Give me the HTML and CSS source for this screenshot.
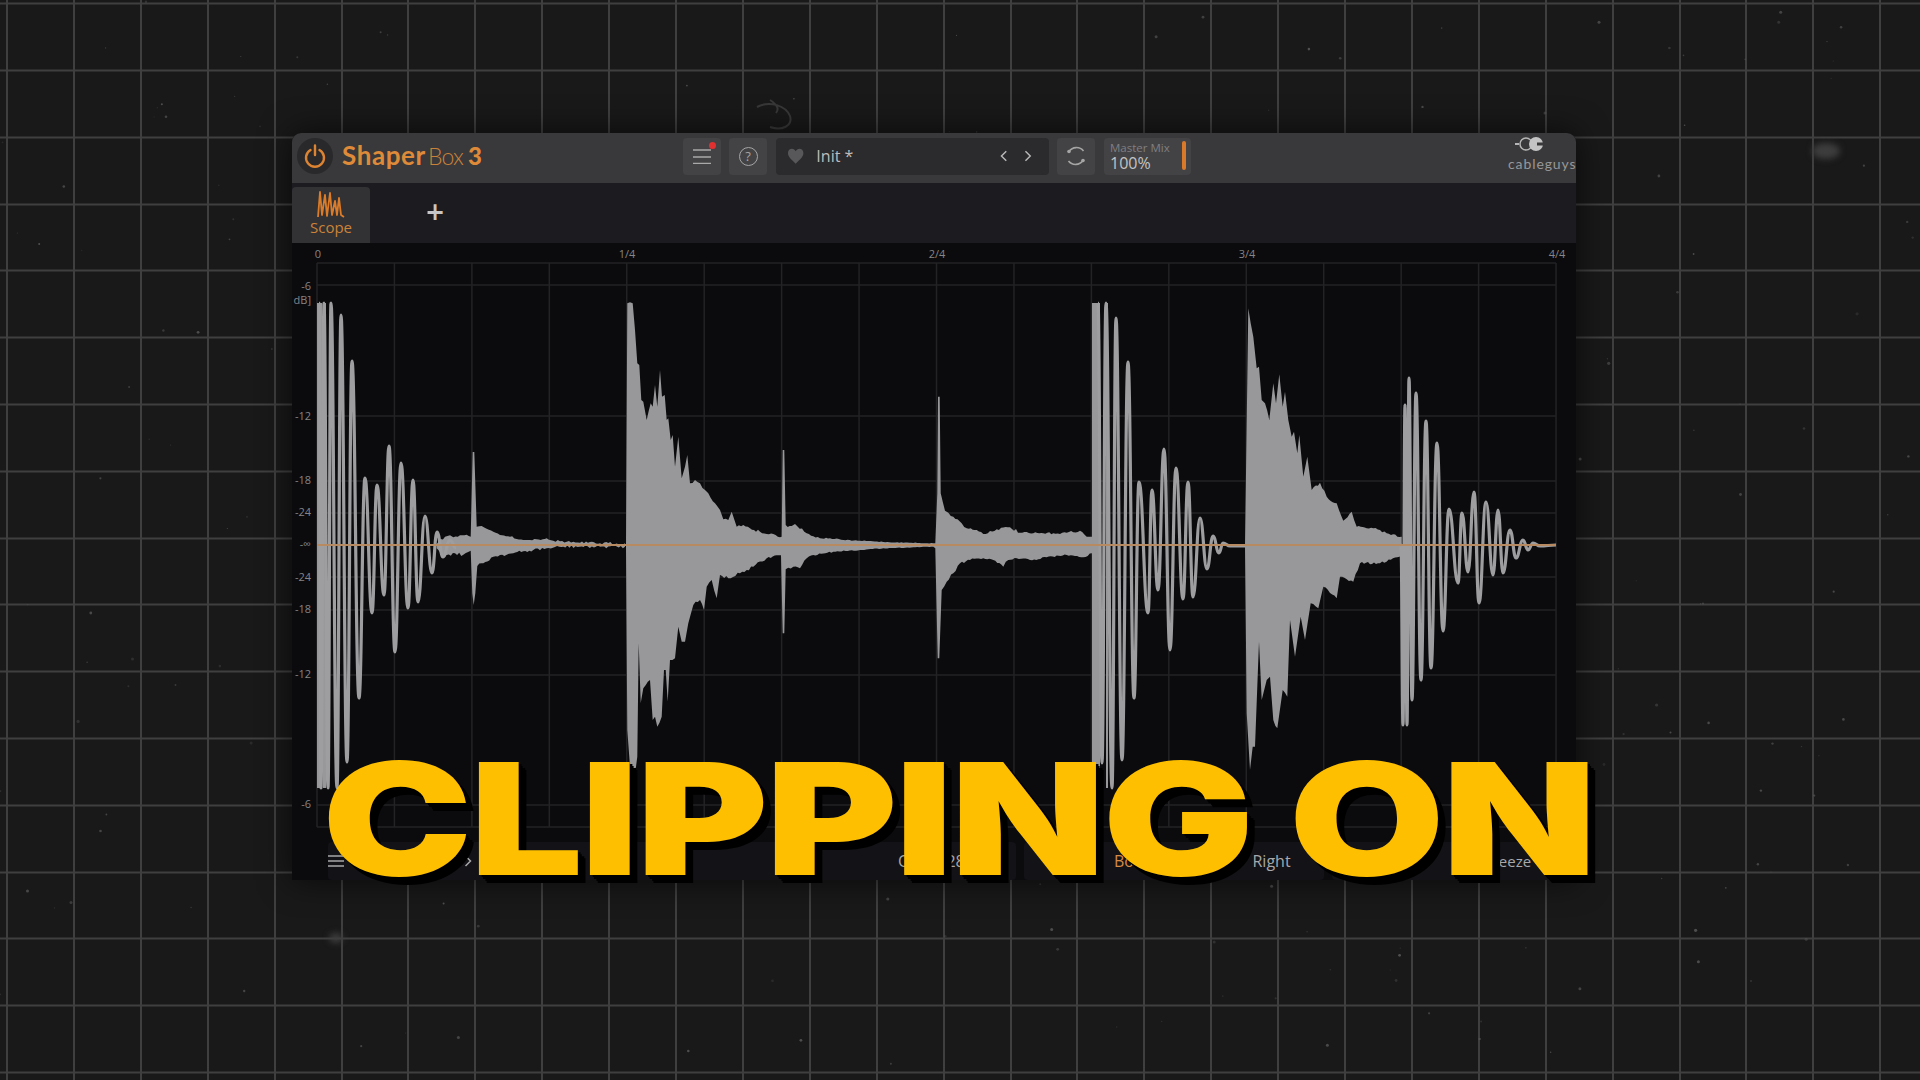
FILE: index.html
```html
<!DOCTYPE html>
<html lang="en">
<head>
    <meta charset="UTF-8">
    <title>ShaperBox 3 - Clipping On</title>
    <link rel="stylesheet" href="styles.css">
</head>
<body>
    <svg class="desk" id="desk" viewBox="0 0 1920 1080">
        <path class="scribble" d="M757 107 C770 100 786 106 790 116 C793 126 782 131 770 127 M770 100 C776 104 780 108 776 113"/>
        <ellipse class="smudge" cx="1826" cy="151" rx="14" ry="8"/>
        <ellipse class="smudge" cx="336" cy="938" rx="7" ry="5"/>
    </svg>

    <div class="plugin">
        <div class="topbar">
            <div class="power">
                <svg width="22" height="24" viewBox="0 0 22 24"><path d="M6.500 6 A9 9 0 1 0 15.500 6 M11 1.500 V11"/></svg>
            </div>
            <div class="title"><b>Shaper</b><span>Box</span><b class="three">3</b></div>

            <div class="btn menu-btn">
                <svg width="20" height="16" viewBox="0 0 20 16"><path d="M1 2 H19 M1 9 H19 M1 15.500 H19"/></svg>
                <i class="red-dot"></i>
            </div>
            <div class="btn help-btn"><span class="help">?</span></div>

            <div class="preset">
                <svg class="heart" width="18" height="16" viewBox="0 0 18 16"><path d="M9 16 C4 11 1 9 1 5 C1 2 3 0.500 5 0.500 C7 0.500 8 1.500 9 3 C10 1.500 11 0.500 13 0.500 C15 0.500 17 2 17 5 C17 9 14 11 9 16 Z"/></svg>
                <span class="preset-name">Init *</span>
                <svg class="chev" width="8" height="14" viewBox="0 0 8 14"><path d="M6.500 2 L1.500 7 L6.500 12"/></svg>
                <svg class="chev" width="8" height="14" viewBox="0 0 8 14"><path d="M1.500 2 L6.500 7 L1.500 12"/></svg>
            </div>

            <div class="btn sync-btn">
                <svg width="22" height="22" viewBox="0 0 22 22"><path d="M4 6.500 A9 9 0 0 1 18.500 6 M18 15.500 A9 9 0 0 1 3.500 16"/><circle cx="4" cy="6.500" r="1.800"/><circle cx="18" cy="15.500" r="1.800"/></svg>
            </div>

            <div class="master">
                <div>
                    <div class="master-label">Master Mix</div>
                    <div class="master-value">100%</div>
                </div>
                <i class="master-bar"></i>
            </div>

            <div class="brand">
                <svg width="32" height="16" viewBox="0 0 32 16">
                    <path class="plug-line" d="M1 8 H5"/>
                    <circle class="plug-ring" cx="12" cy="8" r="6"/>
                    <circle class="plug-fill" cx="22" cy="8" r="7"/>
                    <rect class="plug-cut" x="23" y="6.500" width="8" height="3"/>
                </svg>
                <div class="brand-name">cableguys</div>
            </div>
        </div>

        <div class="tabs">
            <div class="tab">
                <svg width="28" height="27" viewBox="0 0 28 27"><path d="M1 26 L3 1 L5 24 L8 4 L10 25 L13 2 L15 24 L18 10 L20 24 L22 7 L24 24 L27 26"/></svg>
                <span>Scope</span>
            </div>
            <div class="add-tab">+</div>
        </div>

        <svg class="scope" id="scope" viewBox="292 243 1284 599">
            <g class="ruler">
                <text x="318" y="258">0</text>
                <text x="627" y="258">1/4</text>
                <text x="937" y="258">2/4</text>
                <text x="1247" y="258">3/4</text>
                <text x="1557" y="258">4/4</text>
            </g>
            <g id="gridlines"></g>
            <g class="levels">
                <text x="311" y="290">-6</text>
                <text x="311" y="304">dB]</text>
                <text x="311" y="420">-12</text>
                <text x="311" y="484">-18</text>
                <text x="311" y="516">-24</text>
                <text x="311" y="548">-∞</text>
                <text x="311" y="581">-24</text>
                <text x="311" y="613">-18</text>
                <text x="311" y="678">-12</text>
                <text x="311" y="808">-6</text>
            </g>
            <g id="wave"></g>
            <rect class="zero-line" x="317" y="544" width="1239" height="2"/>
        </svg>

        <div class="bottombar">
            <div class="panel panel-list">
                <svg width="16" height="12" viewBox="0 0 16 12"><path d="M0 1 H16 M0 6 H16 M0 11 H16"/></svg>
                <svg class="next" width="8" height="14" viewBox="0 0 8 14"><path d="M1.500 2 L6.500 7 L1.500 12"/></svg>
                <span class="hold">Hold</span>
            </div>
            <div class="panel panel-time">
                <span>O</span><span class="res">28</span><i class="tick"></i>
            </div>
            <div class="panel panel-chan">
                <span class="on">Both</span><span class="right">Right</span>
            </div>
            <div class="panel panel-freeze"><span>Freeze</span></div>
        </div>
    </div>

    <div class="caption">CLIPPING ON</div>

    <script src="wave.js"></script>
</body>
</html>
```

FILE: styles.css
```css
html, body {
    margin: 0;
    height: 100%;
}

body {
    width: 1920px;
    height: 1080px;
    overflow: hidden;
    position: relative;
    box-sizing: border-box;
    padding: 133px 0 0 292px;
    font-family: "Open Sans", Arial, sans-serif;
    background-color: #19191a;
    background-image:
        repeating-linear-gradient(90deg, transparent 0, transparent 6px, #3f3f40 6px, #3f3f40 8px, transparent 8px, transparent 66.900px),
        repeating-linear-gradient(0deg, transparent 0, transparent 6px, #3f3f40 6px, #3f3f40 8px, transparent 8px, transparent 66.800px);
    background-position: 0 0, 0 -0.500px;
}

/* Desk specks */
.desk {
    position: absolute;
    left: 0;
    top: 0;
    width: 1920px;
    height: 1080px;
}
.speck { fill: #5a5a5a; }
.scribble {
    fill: none;
    stroke: #383838;
    stroke-width: 2;
}
.smudge { fill: #3d3d3d; filter: blur(3px); }

/* Plugin window */
.plugin {
    position: relative;
    width: 1284px;
    height: 747px;
    display: flex;
    flex-direction: column;
    background: #0b0b0e;
    border-radius: 9px 9px 0 0;
    box-shadow: 0 0 32px rgba(0, 0, 0, 0.65);
}

.topbar {
    height: 50px;
    flex: none;
    display: flex;
    align-items: center;
    background: #39393b;
    border-radius: 9px 9px 0 0;
    box-sizing: border-box;
    padding: 0 0 4px 5px;
}
.power {
    width: 36px;
    height: 36px;
    border-radius: 50%;
    background: #29292b;
    display: flex;
    align-items: center;
    justify-content: center;
}
.power svg path {
    fill: none;
    stroke: #dd8432;
    stroke-width: 2.400;
    stroke-linecap: round;
}
.title {
    width: 341px;
    margin: -2px 0 0 9px;
    flex: none;
    color: #de8a38;
    font-family: Lato, sans-serif;
    font-size: 26px;
    letter-spacing: 0.600px;
    line-height: 1;
}
.title b { font-weight: 700; }
.title span {
    font-weight: 300;
    font-size: 23px;
    margin-left: 2px;
    letter-spacing: -0.800px;
    color: #c98238;
}
.title .three { margin-left: 5px; font-weight: 900; font-size: 24px; }

.btn {
    width: 38px;
    height: 37px;
    flex: none;
    position: relative;
    border-radius: 4px;
    background: #434345;
    display: flex;
    align-items: center;
    justify-content: center;
}
.menu-btn svg path {
    stroke: #a9a9a9;
    stroke-width: 1.600;
    fill: none;
}
.red-dot {
    position: absolute;
    right: 5px;
    top: 4px;
    width: 7px;
    height: 7px;
    border-radius: 50%;
    background: #e03030;
}
.help-btn { margin-left: 8px; }
.help {
    width: 17px;
    height: 17px;
    border: 1.500px solid #a5a5a5;
    border-radius: 50%;
    color: #a5a5a5;
    font-size: 13px;
    line-height: 17px;
    text-align: center;
}
.preset {
    width: 273px;
    height: 37px;
    margin-left: 9px;
    flex: none;
    box-sizing: border-box;
    padding-left: 11px;
    display: flex;
    align-items: center;
    border-radius: 4px;
    background: #2b2b2d;
}
.heart path { fill: #58585a; }
.preset-name {
    margin-left: 12px;
    width: 190px;
    font-size: 16px;
    color: #bdbdbd;
}
.chev { margin-right: 17px; }
.chev path, .next path {
    fill: none;
    stroke: #b8b8b8;
    stroke-width: 1.500;
}
.sync-btn { margin-left: 8px; }
.sync-btn path {
    fill: none;
    stroke: #a5a5a5;
    stroke-width: 1.600;
}
.sync-btn circle { fill: #a5a5a5; }
.master {
    width: 87px;
    height: 37px;
    margin-left: 9px;
    flex: none;
    box-sizing: border-box;
    padding: 3px 5px 0 6px;
    display: flex;
    justify-content: space-between;
    border-radius: 4px;
    background: #434345;
}
.master-label {
    font-size: 11.500px;
    line-height: 14px;
    color: #7f7f81;
}
.master-value {
    font-size: 16px;
    line-height: 17px;
    color: #c4c4c4;
}
.master-bar {
    width: 4px;
    height: 29px;
    border-radius: 2px;
    background: #d9792a;
}
.brand {
    margin-left: auto;
    width: 68px;
    flex: none;
    text-align: center;
    margin-top: -3px;
}
.brand svg { display: block; margin: -2px 0 4px 1px; position: relative; left: 5px; }
.plug-line { stroke: #b5b5b5; stroke-width: 2; }
.plug-ring { fill: none; stroke: #b5b5b5; stroke-width: 1.500; }
.plug-fill { fill: #c4c4c4; }
.plug-cut { fill: #39393b; }
.brand-name {
    font-family: Lato, sans-serif;
    font-size: 14px;
    letter-spacing: 0.900px;
    line-height: 15px;
    color: #979799;
    white-space: nowrap;
}

.tabs {
    height: 60px;
    flex: none;
    display: flex;
    background: #1c1c20;
}
.tab {
    width: 78px;
    height: 56px;
    margin-top: 4px;
    box-sizing: border-box;
    padding-top: 4px;
    display: flex;
    flex-direction: column;
    align-items: center;
    background: #323234;
    border-radius: 4px 4px 0 0;
    color: #cc8338;
    font-size: 15px;
    line-height: 18px;
}
.tab svg path {
    fill: none;
    stroke: #dd7c28;
    stroke-width: 1.800;
    stroke-linejoin: round;
}
.add-tab {
    margin: 9px 0 0 55px;
    font-family: "DejaVu Sans", sans-serif;
    font-size: 24px;
    font-weight: 700;
    line-height: 40px;
    color: #c6c6c8;
}

.scope {
    width: 1284px;
    height: 599px;
    flex: none;
    display: block;
}
.ruler text, .levels text {
    font-family: "Open Sans", Arial, sans-serif;
    font-size: 11px;
    fill: #858587;
}
.ruler text { text-anchor: middle; }
.levels text { text-anchor: end; }
.grid-line {
    stroke: #232325;
    stroke-width: 1.500;
}
.wave-fill { fill: #98989a; }
.wave-line {
    fill: none;
    stroke: #9e9ea0;
    stroke-width: 3.200;
    stroke-linejoin: round;
}
.zero-line { fill: #b88a62; }

.bottombar {
    flex: 1;
    display: flex;
    box-sizing: border-box;
    padding-left: 36px;
    gap: 8px;
}
.panel {
    height: 38px;
    flex: none;
    box-sizing: border-box;
    display: flex;
    align-items: center;
    background: #131317;
    border-radius: 4px;
    font-size: 16px;
    color: #a8a8aa;
}
.panel-list { width: 340px; }
.panel-list svg path { stroke: #a8a8aa; stroke-width: 1.500; fill: none; }
.next { margin-left: 120px; }
.hold { margin-left: 130px; }
.panel-time { width: 340px; padding-left: 222px; }
.res { margin-left: 36px; }
.tick {
    width: 2px;
    height: 12px;
    margin: 14px 0 0 38px;
    background: #d9792a;
}
.panel-chan { width: 300px; padding-left: 90px; }
.on { color: #d58a45; }
.right { margin-left: 103px; }
.panel-freeze { width: 225px; padding-left: 153px; font-size: 15px; }

/* Big yellow title over the video */
.caption {
    position: absolute;
    left: 322px;
    top: 731px;
    font-family: Inter, "Liberation Sans", sans-serif;
    font-size: 156px;
    font-weight: 900;
    line-height: 176px;
    white-space: nowrap;
    color: #fdbf00;
    transform-origin: 0 0;
    transform: scaleX(1.29);
    letter-spacing: -2.200px;
    text-shadow: 2px 2px 0 #000, 3px 4px 0 #000, 5px 6px 0 #000, 6px 8px 0 #000;
}
```

FILE: wave.js
```js
const NS = "http://www.w3.org/2000/svg";

function addTo(parent, tag, attrs) {
    const el = document.createElementNS(NS, tag);
    for (const key in attrs) el.setAttribute(key, attrs[key]);
    parent.appendChild(el);
    return el;
}

// background specks, seeded so each run looks the same
const desk = document.getElementById("desk");
let seed = 7;
function rnd() {
    seed = (seed * 16807) % 2147483647;
    return seed / 2147483647;
}
for (let i = 0; i < 260; i++) {
    addTo(desk, "circle", {
        class: "speck",
        cx: (rnd() * 1920).toFixed(1),
        cy: (rnd() * 1080).toFixed(1),
        r: (0.5 + rnd() * 1.1).toFixed(1),
        opacity: (0.25 + rnd() * 0.6).toFixed(2),
    });
}

// scope grid
const grid = document.getElementById("gridlines");
const levels = [263, 285, 416, 481, 513, 545, 577, 610, 675, 805, 827];
levels.forEach((y) => addTo(grid, "line", { class: "grid-line", x1: 317, x2: 1556, y1: y, y2: y }));
for (let i = 0; i <= 16; i++) {
    const x = 317 + i * 77.44;
    addTo(grid, "line", { class: "grid-line", x1: x, x2: x, y1: 263, y2: 827 });
}

const wave = document.getElementById("wave");

// dense parts: outlines read off 3x crops, [ox, oy, top, bottom]
const bodies = [
    [280, 260,
        [[470,852],[495,830],[510,826],[520,832],[540,826],[560,824],[572,830],[578,576],[583,576],[590,800],[605,798],[620,806],[640,815],[660,825],[690,830],[730,840],[770,838],[800,835],[820,842],[860,845],[900,848],[960,850],[1035,850]],
        [[470,865],[485,888],[500,885],[525,880],[550,884],[572,872],[577,1000],[581,1035],[586,1000],[592,918],[610,910],[640,890],[660,885],[700,880],[760,870],[800,865],[850,860],[960,860],[1035,860]]],
    [600, 280,
        [[78,797],[82,70],[98,70],[105,150],[112,250],[118,255],[124,360],[130,365],[140,420],[152,370],[158,380],[165,315],[172,380],[180,270],[186,350],[194,345],[200,420],[205,415],[212,480],[218,465],[225,560],[235,470],[245,595],[255,560],[262,525],[270,610],[285,600],[300,610],[315,630],[325,640],[345,670],[360,690],[370,718],[385,720],[395,695],[410,740],[430,735],[450,745],[480,755],[500,762],[520,762],[540,772],[545,770],[548,510],[553,510],[557,735],[575,738],[585,732],[620,760],[660,775],[690,775],[730,780],[780,782],[850,786],[1000,790],[1006,790],[1012,640],[1014,350],[1019,350],[1022,640],[1035,692],[1045,698],[1060,710],[1085,730],[1100,745],[1130,750],[1150,762],[1190,748],[1230,742],[1260,758],[1300,760],[1360,760],[1400,758],[1440,752],[1460,770],[1476,770]],
        [[78,800],[82,1350],[90,1460],[100,1500],[108,1460],[112,1430],[116,1090],[122,1270],[130,1225],[150,1200],[158,1320],[165,1310],[172,1340],[185,1310],[192,1170],[197,1170],[203,1265],[210,1140],[225,1135],[235,1040],[245,1085],[255,1085],[265,1030],[280,975],[300,960],[312,990],[320,920],[335,900],[350,955],[360,885],[385,895],[420,880],[460,860],[500,835],[530,826],[543,826],[548,1060],[553,1060],[557,868],[580,860],[600,865],[620,835],[640,825],[700,815],[780,810],[850,805],[1000,800],[1006,805],[1013,1135],[1018,1135],[1025,930],[1040,905],[1060,880],[1080,850],[1110,840],[1150,835],[1180,840],[1210,860],[1225,840],[1250,835],[1290,840],[1340,832],[1400,825],[1450,832],[1476,820]]],
    [1060, 280,
        [[555,797],[565,85],[572,130],[580,170],[590,265],[597,260],[605,360],[615,370],[628,420],[640,310],[648,370],[658,283],[668,380],[675,335],[685,420],[695,470],[702,455],[712,520],[718,465],[730,590],[742,530],[755,630],[780,608],[800,650],[830,670],[850,722],[875,695],[890,740],[920,745],[940,745],[980,760],[1025,770]],
        [[555,800],[560,1300],[570,1470],[578,1400],[585,1400],[597,1085],[605,1260],[620,1200],[630,1190],[640,1320],[652,1345],[668,1230],[682,1250],[690,1020],[705,1130],[722,1010],[735,1080],[752,970],[775,985],[790,920],[830,955],[840,890],[880,905],[900,850],[960,850],[1025,825]]],
];

// roughen the gentle stretches so the edge looks like noise, not a ruler line
function roughen(pts) {
    const out = [];
    for (let i = 0; i < pts.length - 1; i++) {
        const [ax, ay] = pts[i];
        const [bx, by] = pts[i + 1];
        out.push([ax, ay]);
        if (Math.abs(by - ay) < 60 && bx - ax > 6) {
            const steps = Math.floor((bx - ax) / 6);
            // quieter towards the centre line
            const size = Math.min(Math.abs(ay - 797) / 6, 10);
            for (let s = 1; s < steps; s++) {
                const t = s / steps;
                out.push([ax + (bx - ax) * t, ay + (by - ay) * t + (rnd() - 0.5) * size]);
            }
        }
    }
    out.push(pts[pts.length - 1]);
    return out;
}

bodies.forEach(([ox, oy, top, bottom]) => {
    const pts = roughen(top).concat(roughen(bottom).reverse());
    const str = pts.map(([x, y]) => (ox + x / 3).toFixed(1) + "," + (oy + y / 3).toFixed(1)).join(" ");
    addTo(wave, "polygon", { class: "wave-fill", points: str });
});

// clipped first cycles of the kicks
[[317, 5], [323, 3], [1092, 8], [1106, 2]].forEach(([x, w]) => {
    addTo(wave, "rect", { class: "wave-fill", x: x, y: 303, width: w, height: 485 });
});

// kick tails: one swinging line, listed extreme by extreme
const kicks = [
    [[319,303],[321,788],[324,303],[328,788],[331,303],[337,788],[341,315],[347,762],[352,361],[359,698],[365,478],[372,613],[377,485],[384,595],[389,446],[395,652],[401,463],[408,608],[413,480],[418,602],[425,516],[432,573],[437,532],[443,557],[450,540],[456,548]],
    [[1098,303],[1102,763],[1106,303],[1112,788],[1116,318],[1122,760],[1128,362],[1134,698],[1139,482],[1148,613],[1152,490],[1158,590],[1164,449],[1170,650],[1176,468],[1183,599],[1188,482],[1193,597],[1200,518],[1207,569],[1213,536],[1219,553],[1223,543],[1230,546],[1245,546]],
    [[1401,545],[1403,725],[1405,405],[1407,725],[1409,378],[1412,700],[1416,393],[1421,680],[1426,421],[1431,668],[1437,443],[1443,631],[1449,509],[1458,583],[1462,513],[1468,572],[1474,492],[1479,603],[1486,502],[1493,575],[1498,510],[1503,573],[1510,530],[1516,558],[1523,540],[1528,550],[1533,543],[1540,546],[1556,545]],
];

kicks.forEach((pts) => {
    let d = "M" + pts[0][0] + " " + pts[0][1];
    for (let i = 1; i < pts.length; i++) {
        const [ax, ay] = pts[i - 1];
        const [bx, by] = pts[i];
        const dx = (bx - ax) * 0.45;
        d += " C" + (ax + dx) + " " + ay + " " + (bx - dx) + " " + by + " " + bx + " " + by;
    }
    addTo(wave, "path", { class: "wave-line", d: d });
});
```
